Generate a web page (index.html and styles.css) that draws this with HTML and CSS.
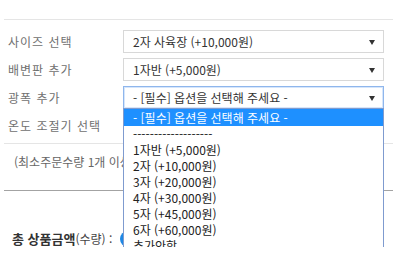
FILE: index.html
```html
<!DOCTYPE html>
<html lang="ko">
<head>
  <meta charset="UTF-8" />
  <title>상품 옵션</title>
  <meta name="viewport" content="width=device-width, initial-scale=1.0" />
  <link rel="stylesheet" href="styles.css">
</head>
<body>
  <div class="options">
    <div class="opt-row">
      <span class="opt-label">사이즈 선택</span>
      <div class="select-box">
        <div class="select">2자 사육장 (+10,000원)<span class="arrow"></span></div>
      </div>
    </div>
    <div class="opt-row">
      <span class="opt-label">배변판 추가</span>
      <div class="select-box">
        <div class="select">1자반 (+5,000원)<span class="arrow"></span></div>
      </div>
    </div>
    <div class="opt-row">
      <span class="opt-label">광폭 추가</span>
      <div class="select-box">
        <div class="select focus">- [필수] 옵션을 선택해 주세요 -<span class="arrow"></span></div>
        <ul class="dropdown">
          <li class="active">- [필수] 옵션을 선택해 주세요 -</li>
          <li>-------------------</li>
          <li>1자반 (+5,000원)</li>
          <li>2자 (+10,000원)</li>
          <li>3자 (+20,000원)</li>
          <li>4자 (+30,000원)</li>
          <li>5자 (+45,000원)</li>
          <li>6자 (+60,000원)</li>
          <li>추가안함</li>
        </ul>
      </div>
    </div>
    <div class="opt-row">
      <span class="opt-label">온도 조절기 선택</span>
      <div class="select-box">
        <div class="select">- [필수] 옵션을 선택해 주세요 -<span class="arrow"></span></div>
      </div>
    </div>
  </div>

  <p class="min-qty">(최소주문수량 1개 이상)</p>

  <div class="total">
    <strong>총 상품금액</strong><span class="qty">(수량) :</span>
    <span class="price-badge">0 (0개)</span>
  </div>
</body>
</html>
```

FILE: styles.css
```css
body {
  margin: 0;
  background: #fff;
  font-family: "Noto Sans CJK KR", "Noto Sans", sans-serif;
  font-size: 12px;
  color: #333;
}
.options {
  margin: 19px 7px 0 4px;
  padding: 10px 9px 6px 4px;
  border-top: 1px solid #e5e5e5;
  border-bottom: 1px solid #e5e5e5;
  display: flex;
  flex-direction: column;
  gap: 5px;
}
.opt-row {
  display: flex;
  align-items: center;
  height: 23px;
}
.opt-label {
  width: 115px;
  color: #707070;
  letter-spacing: 1px;
}
.select-box {
  position: relative;
  flex: 1;
}
.select {
  position: relative;
  height: 21px;
  line-height: 21px;
  padding-left: 9px;
  border: 1px solid #d8d8d8;
  background: #fff;
  color: #333;
  white-space: nowrap;
  overflow: hidden;
}
.select.focus {
  border-color: #8fb6ec;
  box-shadow: inset 0 0 0 1px #d6e6fb;
}
.arrow {
  position: absolute;
  right: 8px;
  top: 9px;
  width: 0;
  height: 0;
  border-left: 3px solid transparent;
  border-right: 3px solid transparent;
  border-top: 5px solid #333;
}
.dropdown {
  position: absolute;
  top: 22px;
  left: 0;
  right: 0;
  margin: 0;
  padding: 0 0 1px;
  list-style: none;
  background: #fff;
  border: 1px solid #7f9bcf;
  z-index: 5;
}
.dropdown li {
  height: 16px;
  line-height: 16px;
  padding-left: 9px;
  color: #222;
  white-space: nowrap;
  overflow: hidden;
}
.dropdown li.active {
  height: 17px;
  line-height: 17px;
  background: #1e90ff;
  color: #fff;
}
.min-qty {
  margin: 0 7px 0 4px;
  padding: 10px 0 20px 10px;
  line-height: 16px;
  color: #666;
  border-bottom: 1px solid #a3a3a3;
}
.total {
  display: flex;
  align-items: center;
  padding: 40px 0 0 12px;
  line-height: 16px;
  font-size: 13px;
  color: #333;
}
.total strong {
  font-weight: bold;
}
.qty {
  font-size: 12px;
  color: #444;
  margin-right: 8px;
}
.price-badge {
  background: #1e88e5;
  color: #fff;
  border-radius: 8px;
  padding: 0 8px;
  height: 16px;
  font-size: 11px;
}
```
